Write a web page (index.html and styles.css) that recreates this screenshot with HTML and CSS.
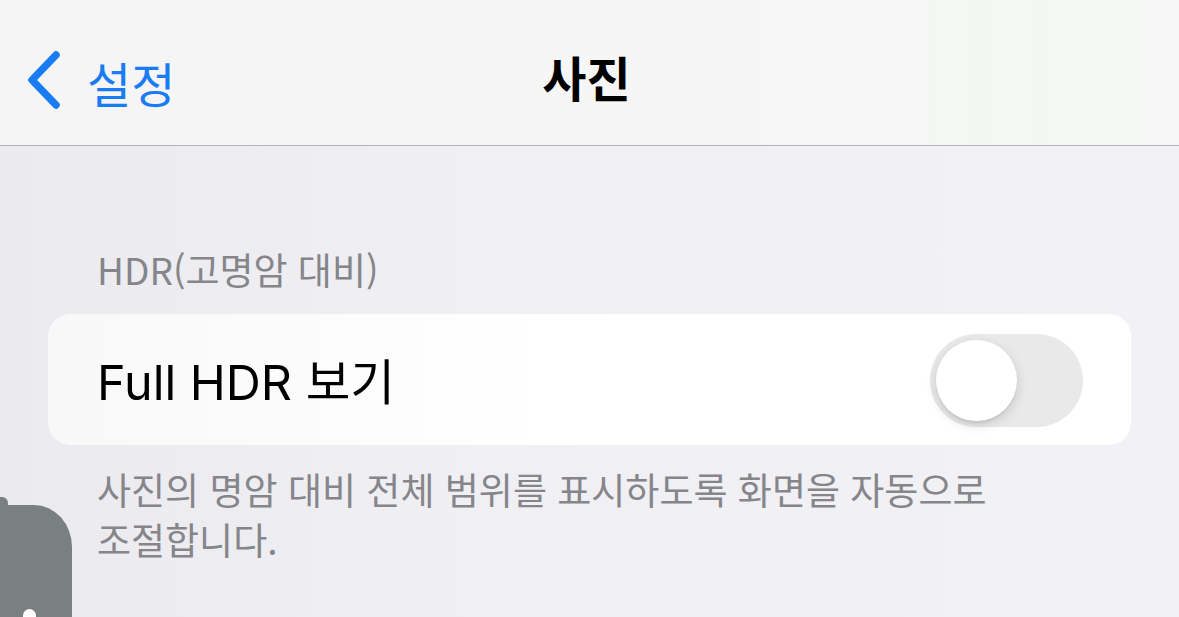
FILE: index.html
```html
<!DOCTYPE html>
<html lang="ko">
<head>
<meta charset="utf-8">
<title>사진</title>
<link rel="stylesheet" href="styles.css">
</head>
<body>
<header class="navbar">
  <a class="back" href="#">
    <svg class="chevron" viewBox="0 0 36 60" width="36" height="60" aria-hidden="true">
      <path d="M31 5 L7 30 L31 55" fill="none" stroke="#1a7cf5" stroke-width="7.5" stroke-linecap="round" stroke-linejoin="round"/>
    </svg>
    <span class="back-label">설정</span>
  </a>
  <h1 class="title">사진</h1>
</header>

<main class="content">
  <section class="group">
    <h2 class="group-header">HDR(고명암 대비)</h2>
    <div class="card">
      <div class="row">
        <span class="row-label">Full HDR 보기</span>
        <span class="switch" role="switch" aria-checked="false"><span class="knob"></span></span>
      </div>
    </div>
    <p class="group-footer">사진의 명암 대비 전체 범위를 표시하도록 화면을 자동으로<br>조절합니다.</p>
  </section>
</main>

<div class="float-tab"><span class="float-bump"></span><span class="float-dot"></span></div>
</body>
</html>
```
FILE: styles.css
```css
html, body {
  margin: 0;
  padding: 0;
}

body {
  width: 1179px;
  height: 617px;
  overflow: hidden;
  background: linear-gradient(90deg, #eaeaef 0%, #efeff4 40%, #f1f1f6 100%);
  font-family: Inter, "Noto Sans CJK KR", sans-serif;
  position: relative;
}

.navbar {
  height: 146px;
  box-sizing: border-box;
  border-bottom: 1px solid #b3b3b8;
  background: linear-gradient(90deg, #f5f5f5 0%, #f6f6f6 75%, #f3f8f3 85%, #f6f7f6 100%);
  display: flex;
  align-items: center;
  justify-content: center;
  position: relative;
}

.back {
  position: absolute;
  left: 25px;
  top: 48px;
  display: flex;
  align-items: center;
  gap: 26px;
  text-decoration: none;
}

.chevron {
  display: block;
}

.back-label {
  font-family: "Noto Sans CJK KR", sans-serif;
  font-size: 48px;
  color: #1a7cf5;
  line-height: 60px;
  margin-top: 4px;
}

.title {
  margin: 6px 0 0 -6px;
  font-family: "Noto Sans CJK KR", sans-serif;
  font-size: 48px;
  font-weight: 700;
  color: #000;
  line-height: 60px;
}

.content {
  padding: 92px 48px 0;
}

.group-header {
  margin: 0 0 14px 49px;
  font-family: "Noto Sans CJK KR", sans-serif;
  font-size: 37px;
  font-weight: 400;
  color: #85858a;
  line-height: 62px;
}

.card {
  background: linear-gradient(90deg, #f8f8f8 0%, #ffffff 45%, #ffffff 100%);
  border-radius: 22px;
  height: 131px;
}

.row {
  height: 100%;
  display: flex;
  align-items: center;
  justify-content: space-between;
  padding: 0 48px 0 49px;
}

.row-label {
  font-size: 48.5px;
  color: #000;
  font-family: Inter, "Noto Sans CJK KR", sans-serif;
  margin-top: -2px;
}

.switch {
  width: 153px;
  height: 93px;
  border-radius: 47px;
  background: #e9e9ea;
  position: relative;
  display: block;
  margin-top: 1px;
}

.knob {
  position: absolute;
  left: 6px;
  top: 6px;
  width: 81px;
  height: 81px;
  border-radius: 50%;
  background: #fff;
  box-shadow: 0 4px 12px rgba(0, 0, 0, 0.14), 0 3px 1px rgba(0, 0, 0, 0.04);
}

.group-footer {
  margin: 19px 0 0 49px;
  font-family: "Noto Sans CJK KR", sans-serif;
  font-size: 37px;
  color: #85858a;
  line-height: 50px;
}

.float-tab {
  position: absolute;
  left: 0;
  top: 505px;
  width: 72px;
  height: 112px;
  background: #7a7f81;
  border-top-right-radius: 38px 42px;
}

.float-bump {
  position: absolute;
  left: 0;
  top: -8px;
  width: 8px;
  height: 12px;
  background: #7a7f81;
  border-top-right-radius: 6px;
}

.float-dot {
  position: absolute;
  left: 23px;
  top: 104px;
  width: 13px;
  height: 18px;
  border-radius: 7px;
  background: #fff;
}
```
